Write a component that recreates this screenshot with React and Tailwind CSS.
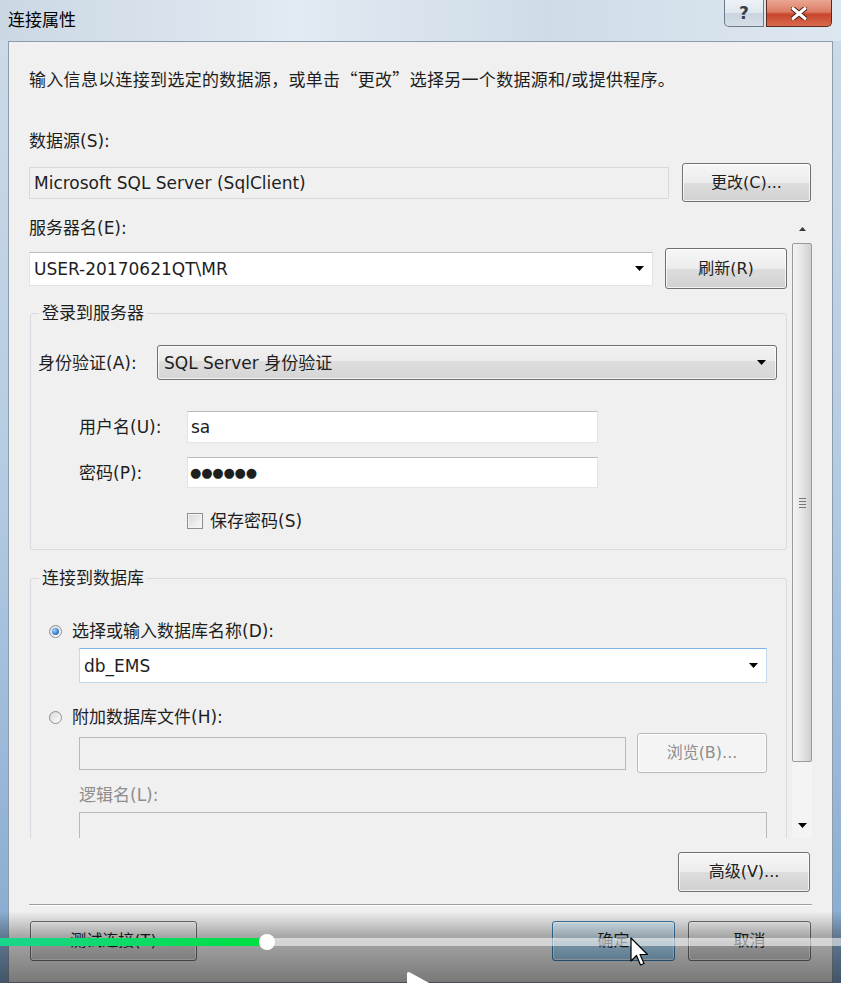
import React from 'react';

// Win7 style "连接属性" dialog, frame from a video (player bar over the bottom)
const font = "font-['DejaVu_Sans','Noto_Sans_CJK_SC',sans-serif]";
const cjk = "font-['Noto_Sans_CJK_SC',sans-serif]";

const Arrow = () => (
  <svg width="9" height="5" viewBox="0 0 9 5" className="shrink-0">
    <polygon points="0,0 9,0 4.5,5" fill="#000" />
  </svg>
);

const Btn = ({ children, className = '', disabled, primary }) => {
  let look = 'border-[#707070] bg-[linear-gradient(to_bottom,#f6f6f6_0%,#ececec_50%,#dddddd_51%,#d1d1d1_100%)] text-[#1e1e1e]';
  if (disabled) look = 'border-[#b5b9bc] bg-[#f4f4f4] text-[#8d8d8d]';
  if (primary) look = 'border-[#3c7fb1] bg-[linear-gradient(to_bottom,#e3f2fc_0%,#d3ebfb_50%,#b6def8_51%,#9dcdef_100%)] text-[#1e1e1e]';
  return (
    <div className={`flex items-center justify-center rounded-[3px] border text-[16px] leading-[20px] shadow-[inset_0_0_0_1px_rgba(255,255,255,0.75)] ${look} ${className}`}>
      {children}
    </div>
  );
};

const Radio = ({ checked }) => (
  <div className="flex h-[13px] w-[13px] shrink-0 items-center justify-center rounded-full border border-[#8e8f8f] bg-[linear-gradient(135deg,#d8d8d8,#ffffff)]">
    {checked && <div className="h-[7px] w-[7px] rounded-full bg-[radial-gradient(circle_at_35%_35%,#9fd3fb,#2a6fc0_70%)]" />}
  </div>
);

const Legend = ({ children }) => (
  <legend className="ml-[8px] px-[3px] leading-[20px]">{children}</legend>
);

export default function App() {
  return (
    <div className={`relative h-[983px] w-[841px] overflow-hidden bg-[linear-gradient(to_bottom,#cfdbe7_0%,#b3cbe2_50%,#86a9cf_100%)] text-[#1e1e1e] ${font}`}>
      {/* title bar */}
      <div className="flex h-[41px] items-start bg-[linear-gradient(to_right,#cbd8e4_0%,#e2eaf2_35%,#cfdce8_65%,#dde7f0_100%)]">
        <div className="pl-[8px] pt-[9px] text-[17px] leading-[22px] text-black">连接属性</div>
        <div className="ml-auto mr-[9px] flex gap-[2px]">
          <div className="flex h-[27px] w-[40px] items-center justify-center rounded-bl-[5px] border border-t-0 border-[#6d7a88] bg-[linear-gradient(to_bottom,#edf2f6_0%,#dfe7ee_50%,#c9d4de_51%,#d6dfe8_100%)] text-[17px] font-bold leading-none text-[#34404c]">
            ?
          </div>
          <div className="flex h-[27px] w-[66px] items-center justify-center rounded-br-[5px] border border-t-0 border-[#5e2a20] bg-[linear-gradient(to_bottom,#eaa693_0%,#dd7d64_45%,#c8462c_55%,#d86a4e_100%)]">
            <svg width="16" height="13" viewBox="0 0 16 13">
              <path d="M2 1.5 L14 11.5 M14 1.5 L2 11.5" stroke="#4a2018" strokeWidth="5" strokeLinecap="round" />
              <path d="M2 1.5 L14 11.5 M14 1.5 L2 11.5" stroke="#ffffff" strokeWidth="3" strokeLinecap="round" />
            </svg>
          </div>
        </div>
      </div>

      {/* client area */}
      <div className="mx-[8px] h-[942px] border border-[#8d9cac] bg-[#f0f0f0] px-[20px] pt-[27px] text-[17px] leading-[20px]">
        <div className="tracking-[0.3px]">
          输入信息以连接到选定的数据源，或单击<span className={cjk}>“</span>更改<span className={cjk}>”</span>选择另一个数据源和/或提供程序。
        </div>

        <div className="mt-[41px]">数据源(S):</div>
        <div className="mt-[12px] flex h-[39px] items-center">
          <div className="flex h-[32px] w-[640px] items-center border border-[#d9d9d9] bg-[#f0f0f0] pl-[4px]">
            Microsoft SQL Server (SqlClient)
          </div>
          <Btn className="ml-[13px] h-[39px] w-[129px]">更改(C)...</Btn>
        </div>

        {/* scrolling panel */}
        <div className="mt-[12px] flex h-[624px] overflow-hidden">
          <div className="w-[761px]">
            <div className="mt-[4px]">服务器名(E):</div>
            <div className="mt-[10px] flex h-[41px] items-center">
              <div className="flex h-[34px] w-[624px] items-center justify-between border border-[#e1e4e8] border-t-[#b8bcc2] bg-white pl-[4px] pr-[8px]">
                <span>USER-20170621QT\MR</span>
                <Arrow />
              </div>
              <Btn className="ml-[12px] h-[41px] w-[122px]">刷新(R)</Btn>
            </div>

            <fieldset className="ml-[1px] mt-[14px] w-[757px] rounded-[3px] border border-[#d5dbe0] p-0 pb-[18px]">
              <Legend>登录到服务器</Legend>
              <div className="mt-[22px] flex h-[35px] items-center">
                <div className="w-[126px] pl-[7px]">身份验证(A):</div>
                <div className="flex h-[35px] w-[620px] items-center justify-between rounded-[3px] border border-[#707070] bg-[linear-gradient(to_bottom,#f2f2f2_0%,#ebebeb_45%,#dddddd_46%,#d6d6d6_100%)] pl-[6px] pr-[10px] shadow-[inset_0_0_0_1px_rgba(255,255,255,0.7)]">
                  <span>SQL Server 身份验证</span>
                  <Arrow />
                </div>
              </div>
              <div className="mt-[31px] flex h-[32px] items-center">
                <div className="w-[156px] pl-[48px]">用户名(U):</div>
                <div className="flex h-[32px] w-[411px] items-center border border-[#e1e4e8] border-t-[#b8bcc2] bg-white pl-[3px]">sa</div>
              </div>
              <div className="mt-[14px] flex h-[31px] items-center">
                <div className="w-[156px] pl-[48px]">密码(P):</div>
                <div className="flex h-[31px] w-[411px] items-center border border-[#e1e4e8] border-t-[#b8bcc2] bg-white pl-[2px] text-[13px] tracking-[-0.2px]">
                  ●●●●●●
                </div>
              </div>
              <div className="mt-[23px] flex h-[20px] items-center pl-[156px]">
                <div className="h-[16px] w-[16px] border border-[#8f8f8f] bg-[linear-gradient(135deg,#d9d9d9,#f9f9f9)] shadow-[inset_0_0_0_1px_#f4f4f4]" />
                <span className="ml-[7px]">保存密码(S)</span>
              </div>
            </fieldset>

            <fieldset className="ml-[1px] mt-[18px] w-[757px] rounded-[3px] border border-[#d5dbe0] p-0 pb-[30px]">
              <Legend>连接到数据库</Legend>
              <div className="mt-[33px] flex h-[20px] items-center pl-[18px]">
                <Radio checked />
                <span className="ml-[10px]">选择或输入数据库名称(D):</span>
              </div>
              <div className="ml-[48px] mt-[7px] flex h-[35px] w-[688px] items-center justify-between border border-[#c5daed] border-t-[#7eb4ea] bg-white pl-[4px] pr-[8px]">
                <span>db_EMS</span>
                <Arrow />
              </div>
              <div className="mt-[24px] flex h-[20px] items-center pl-[18px]">
                <Radio />
                <span className="ml-[10px]">附加数据库文件(H):</span>
              </div>
              <div className="ml-[48px] mt-[6px] flex h-[40px] items-center">
                <div className="h-[33px] w-[547px] border border-[#b9b9b9] bg-[#f0f0f0]" />
                <Btn disabled className="ml-[11px] h-[40px] w-[130px]">浏览(B)...</Btn>
              </div>
              <div className="ml-[48px] mt-[12px] text-[#8d8d8d]">逻辑名(L):</div>
              <div className="ml-[48px] mt-[7px] h-[33px] w-[688px] border border-[#b9b9b9] bg-[#f0f0f0]" />
            </fieldset>
          </div>

          {/* scrollbar */}
          <div className="ml-[2px] flex w-[20px] flex-col">
            <div className="flex h-[29px] items-center justify-center">
              <svg width="7" height="4" viewBox="0 0 7 4"><polygon points="0,4 7,4 3.5,0" fill="#3a3a3a" /></svg>
            </div>
            <div className="flex h-[519px] items-center justify-center rounded-[2px] border border-[#9a9a9a] bg-[linear-gradient(to_right,#f3f3f3_0%,#e6e6e6_50%,#cfcfcf_100%)]">
              <div className="flex flex-col gap-[2px]">
                <div className="h-[1px] w-[7px] bg-[#777]" />
                <div className="h-[1px] w-[7px] bg-[#777]" />
                <div className="h-[1px] w-[7px] bg-[#777]" />
                <div className="h-[1px] w-[7px] bg-[#777]" />
              </div>
            </div>
            <div className="flex-1 bg-[#f4f4f4]" />
            <div className="flex h-[26px] items-center justify-center bg-[#f4f4f4]">
              <Arrow />
            </div>
          </div>
        </div>

        <div className="mt-[14px] flex justify-end pr-[2px]">
          <Btn className="h-[40px] w-[132px]">高级(V)...</Btn>
        </div>
        <div className="mt-[12px] h-[1px] bg-[#a0a0a0] shadow-[0_1px_0_#ffffff]" />
        <div className="mt-[16px] flex h-[40px] items-center">
          <Btn className="ml-[1px] h-[40px] w-[167px]">测试连接(T)</Btn>
          <Btn primary className="ml-auto h-[40px] w-[123px]">确定</Btn>
          <Btn className="ml-[13px] mr-[1px] h-[40px] w-[123px]">取消</Btn>
        </div>
      </div>

      {/* video player overlay */}
      <div className="absolute bottom-0 left-0 right-0 h-[72px] bg-[linear-gradient(to_bottom,rgba(0,0,0,0)_0%,rgba(0,0,0,0.3)_35%,rgba(0,0,0,0.5)_100%)]" />
      <div className="absolute left-0 right-0 top-[938px] h-[8px] bg-white/55">
        <div className="h-full w-[267px] bg-[linear-gradient(to_right,#1ad58c,#00e040)]" />
      </div>
      <div className="absolute left-[259px] top-[934px] h-[16px] w-[16px] rounded-full bg-white" />
      <svg className="absolute left-[404px] top-[971px]" width="30" height="30" viewBox="0 0 30 30">
        <path d="M3 3 Q3 0 6 1.5 L27 13 Q29 15 27 17 L6 28.5 Q3 30 3 27 Z" fill="#ffffff" />
      </svg>
      {/* mouse pointer */}
      <svg className="absolute left-[630px] top-[937px]" width="19" height="30" viewBox="0 0 19 30">
        <path d="M1 1 L1 24 L6.5 18.5 L10.5 28 L14 26.5 L10 17.5 L17.5 17.5 Z" fill="#ffffff" stroke="#000000" strokeWidth="1.2" strokeLinejoin="round" />
      </svg>
    </div>
  );
}
